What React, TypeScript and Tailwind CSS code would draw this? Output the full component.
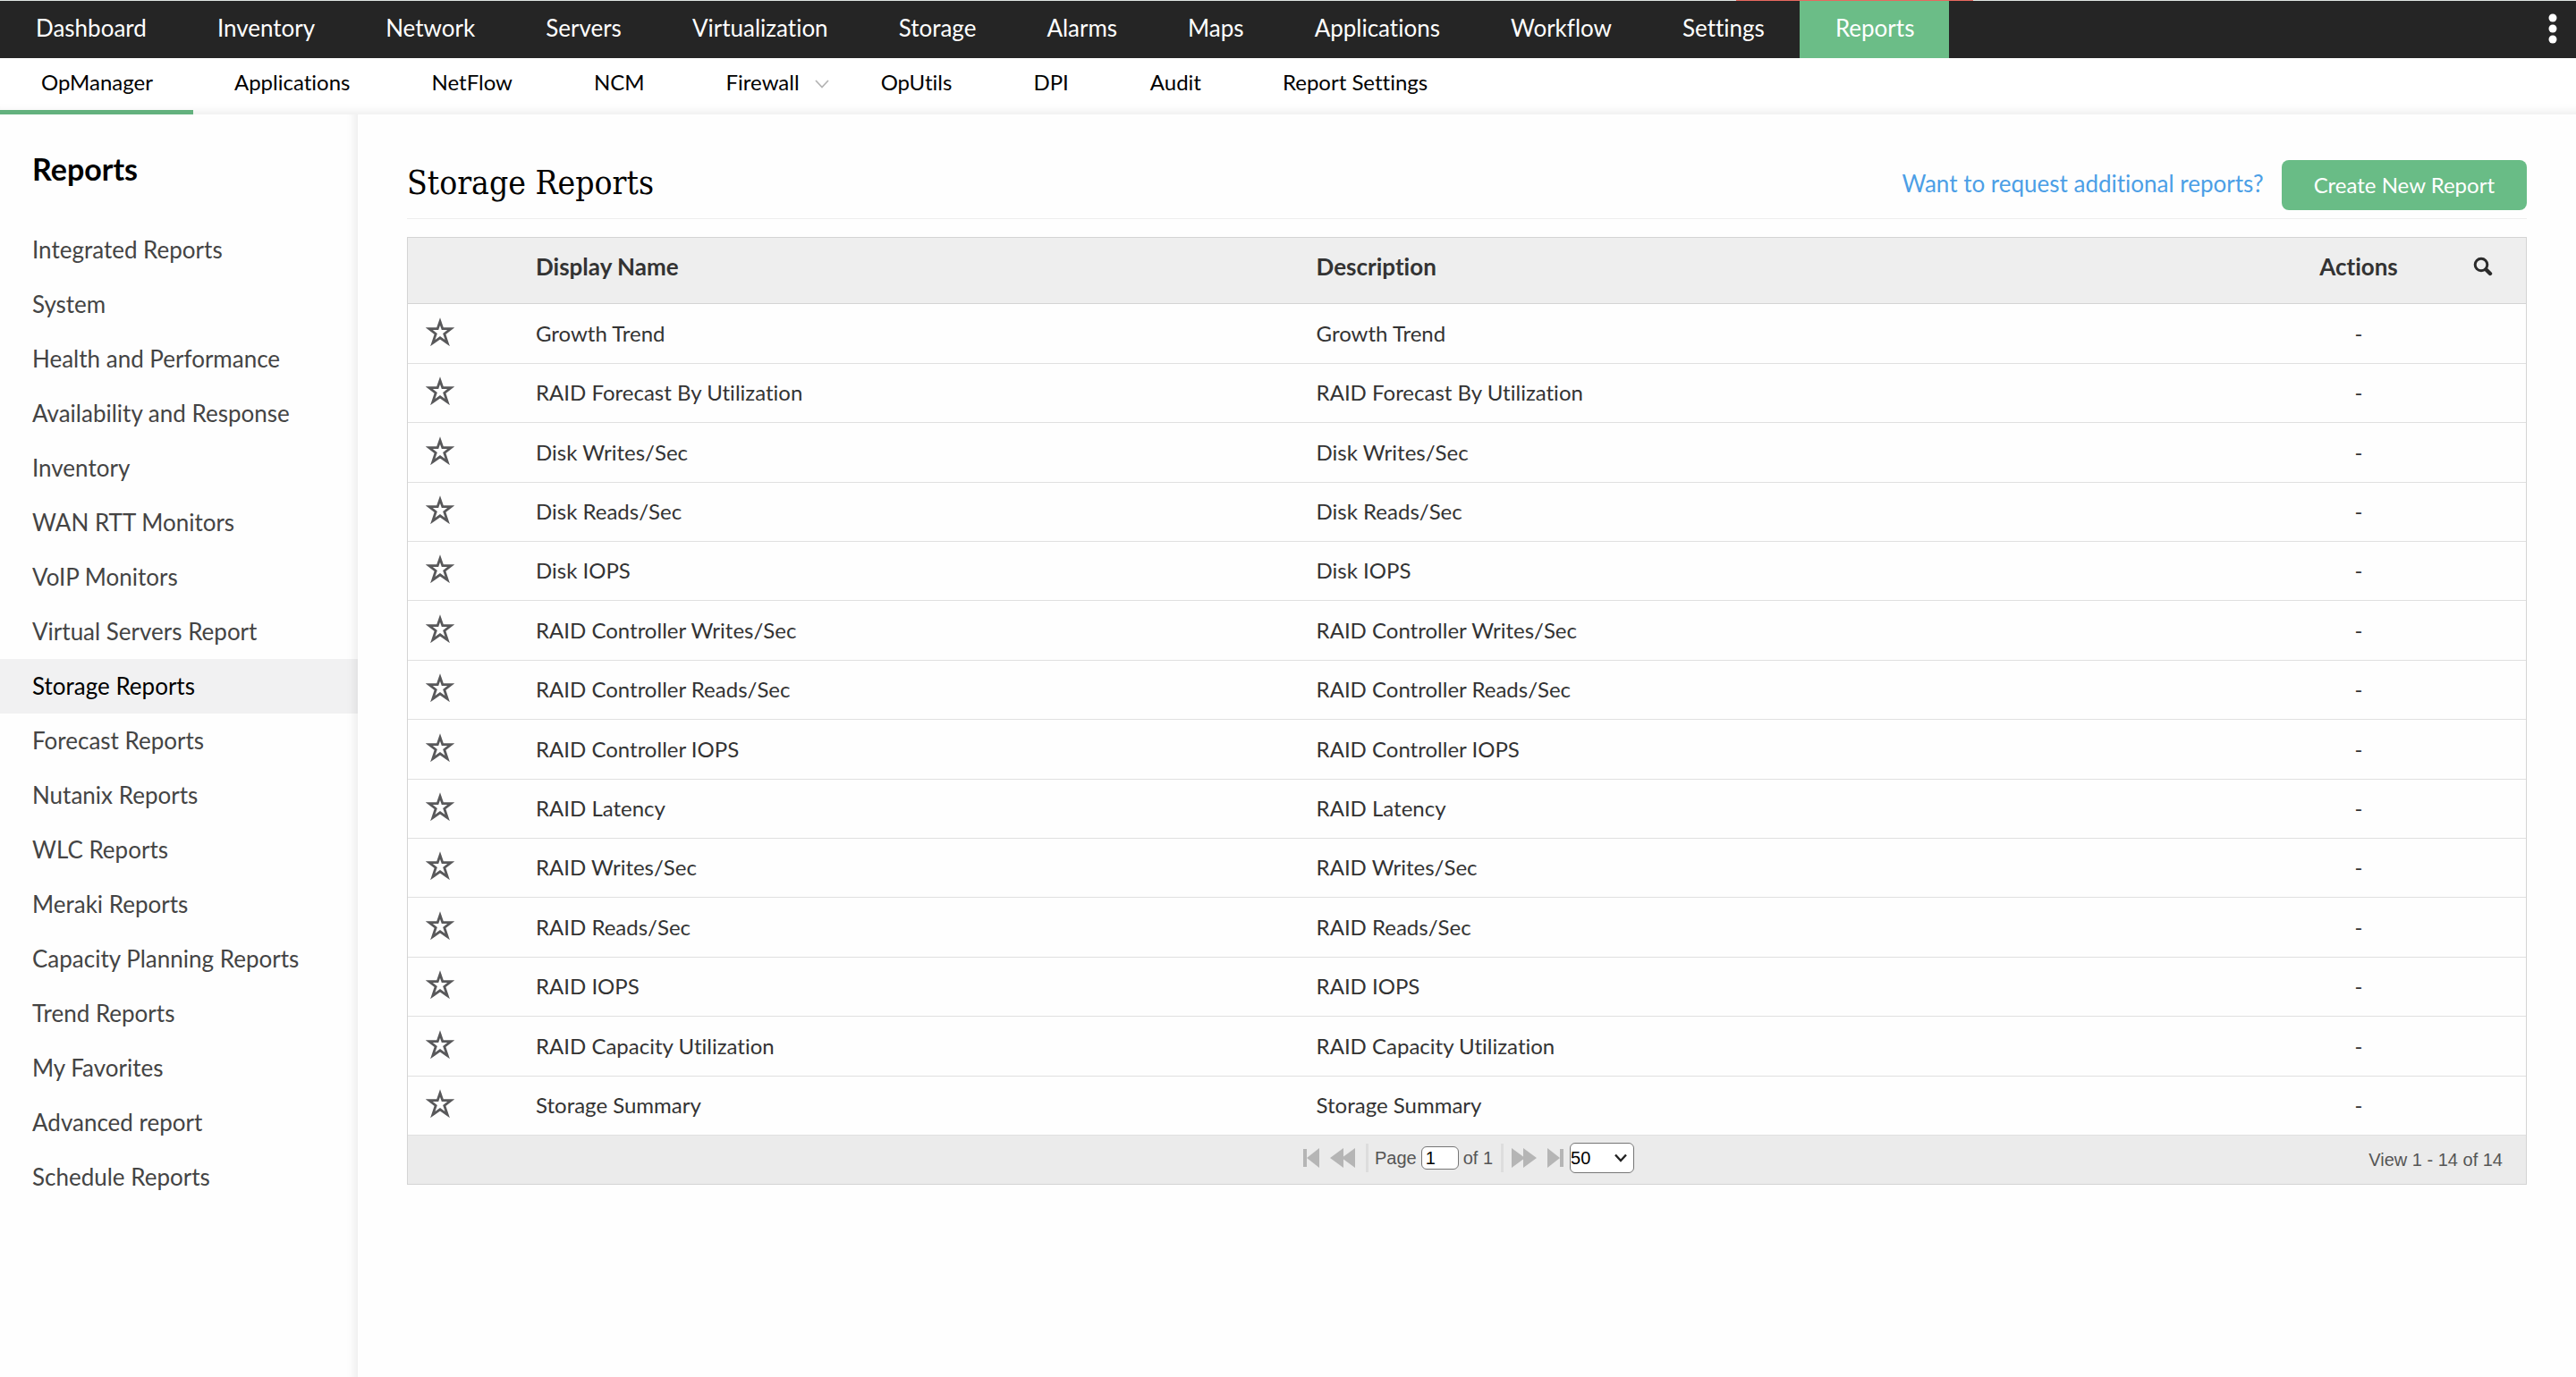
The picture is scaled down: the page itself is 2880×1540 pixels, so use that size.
import { useState } from 'react';

const modules = [
  'Dashboard',
  'Inventory',
  'Network',
  'Servers',
  'Virtualization',
  'Storage',
  'Alarms',
  'Maps',
  'Applications',
  'Workflow',
  'Settings',
  'Reports',
];

const products = ['OpManager', 'Applications', 'NetFlow', 'NCM', 'Firewall', 'OpUtils', 'DPI', 'Audit', 'Report Settings'];

const categories = [
  'Integrated Reports',
  'System',
  'Health and Performance',
  'Availability and Response',
  'Inventory',
  'WAN RTT Monitors',
  'VoIP Monitors',
  'Virtual Servers Report',
  'Storage Reports',
  'Forecast Reports',
  'Nutanix Reports',
  'WLC Reports',
  'Meraki Reports',
  'Capacity Planning Reports',
  'Trend Reports',
  'My Favorites',
  'Advanced report',
  'Schedule Reports',
];

const reports = [
  'Growth Trend',
  'RAID Forecast By Utilization',
  'Disk Writes/Sec',
  'Disk Reads/Sec',
  'Disk IOPS',
  'RAID Controller Writes/Sec',
  'RAID Controller Reads/Sec',
  'RAID Controller IOPS',
  'RAID Latency',
  'RAID Writes/Sec',
  'RAID Reads/Sec',
  'RAID IOPS',
  'RAID Capacity Utilization',
  'Storage Summary',
];

const StarIcon = () => (
  <svg viewBox="0 0 32 32" className="h-8 w-8" fill="none" stroke="#58585a" strokeWidth="2.8">
    <path d="M16 4.5 18.8 12.6H28.2L20.8 18.4 24.2 28.6 16 22.8 7.8 28.6 11.2 18.4 3.8 12.6H13.2Z" />
  </svg>
);

const SearchIcon = () => (
  <svg viewBox="0 0 22 22" className="h-[22px] w-[22px]" fill="none" stroke="#2b2b2b">
    <circle cx="9" cy="9" r="6.8" strokeWidth="3" />
    <path d="M14.5 14.5 19 19" strokeWidth="4.4" strokeLinecap="round" />
  </svg>
);

const TopNav = () => (
  <nav className="flex h-16 justify-between bg-[#252525] text-[26px] text-white">
    <div className="flex">
      {modules.map((name) => (
        <a
          key={name}
          href="#"
          className={`flex items-center pr-[39px] pb-1 pl-10 ${name === 'Reports' ? 'bg-[#6bbd87]' : ''}`}
        >
          {name}
        </a>
      ))}
    </div>
    <button aria-label="More" className="flex w-[52px] items-center justify-center">
      <svg viewBox="0 0 10 36" className="h-9 w-[10px]" fill="#fff">
        <circle cx="5" cy="5" r="4.5" />
        <circle cx="5" cy="17" r="4.5" />
        <circle cx="5" cy="29" r="4.5" />
      </svg>
    </button>
  </nav>
);

const SubNav = () => (
  <nav className="flex h-[63px] bg-white text-2xl text-black shadow-[inset_0_-14px_12px_-12px_rgba(0,0,0,0.09)]">
    {products.map((name) => (
      <a
        key={name}
        href="#"
        className={`relative flex items-center border-b-5 pr-[45px] pb-[5px] pl-[46px] ${
          name === 'OpManager' ? 'border-[#63b17e]' : 'border-transparent'
        }`}
      >
        {name}
        {name === 'Firewall' && (
          <svg viewBox="0 0 16 10" className="absolute top-6 right-3 h-[10px] w-4" fill="none" stroke="#b5b5b5">
            <path d="M1 1 8 8.5 15 1" strokeWidth="1.8" />
          </svg>
        )}
      </a>
    ))}
  </nav>
);

const Sidebar = () => (
  <aside className="w-[400px] shrink-0 pt-9 shadow-[inset_-14px_0_12px_-12px_rgba(0,0,0,0.09)]">
    <h2 className="px-9 text-[34px] leading-[50px] font-bold text-black">Reports</h2>
    <ul className="pt-[35px]">
      {categories.map((name) => (
        <li key={name}>
          <a
            href="#"
            className={`block px-9 text-[26px] leading-[61px] ${
              name === 'Storage Reports' ? 'bg-[#28284010] text-black' : 'text-[#444]'
            }`}
          >
            {name}
          </a>
        </li>
      ))}
    </ul>
  </aside>
);

const ReportTable = () => (
  <table className="w-full table-fixed text-left text-2xl text-[#333]">
    <colgroup>
      <col className="w-[143px]" />
      <col className="w-[36.85%]" />
      <col />
      <col className="w-[182px]" />
      <col className="w-24" />
    </colgroup>
    <thead>
      <tr className="h-[73px] border-b border-[#d4d4d4] bg-[#eee] text-[26px] font-bold">
        <th aria-label="Favorite" />
        <th className="pb-2">Display Name</th>
        <th className="pb-2">Description</th>
        <th className="pb-2 text-center">Actions</th>
        <th className="pb-2">
          <button aria-label="Search" className="mx-auto block">
            <SearchIcon />
          </button>
        </th>
      </tr>
    </thead>
    <tbody>
      {reports.map((name) => (
        <tr key={name} className="h-[66px] border-b border-[#e0e0e0] nth-[5n+1]:h-[67px] nth-[5n+3]:h-[67px]">
          <td className="pb-1 pl-5">
            <button aria-label={`Add ${name} to favorites`} className="block">
              <StarIcon />
            </button>
          </td>
          <td>{name}</td>
          <td>{name}</td>
          <td className="text-center">-</td>
          <td />
        </tr>
      ))}
    </tbody>
  </table>
);

const Pager = () => {
  const [page, setPage] = useState('1');

  return (
    <div className="grid h-[54px] grid-cols-[1fr_auto_1fr] items-center bg-[#ebebeb] font-['Liberation_Sans',Arial,sans-serif] text-xl text-[#555]">
      <div />
      <div className="flex items-center pb-1 pl-1">
        <button aria-label="First page" className="mr-3">
          <svg viewBox="0 0 18 22" className="h-[22px] w-[18px]" fill="#b5b5b5">
            <path d="M0 1H4V21H0ZM18 0V22L4 11Z" />
          </svg>
        </button>
        <button aria-label="Previous page" className="mr-3">
          <svg viewBox="0 0 28 22" className="h-[22px] w-7" fill="#b5b5b5">
            <path d="M15 0V22L0 11ZM28 0V22L13 11Z" />
          </svg>
        </button>
        <span className="mr-[7px] h-8 w-[3px] bg-[#ddd]" />
        <label htmlFor="page">Page</label>
        <input
          id="page"
          value={page}
          onChange={(e) => setPage(e.target.value)}
          className="mx-[5px] h-[26px] w-[42px] rounded-md border border-[#767676] bg-white px-1 text-black"
        />
        <span>of 1</span>
        <span className="mx-[9px] h-8 w-[3px] bg-[#ddd]" />
        <button aria-label="Next page" className="mr-3">
          <svg viewBox="0 0 28 22" className="h-[22px] w-7" fill="#b5b5b5">
            <path d="M0 0V22L15 11ZM13 0V22L28 11Z" />
          </svg>
        </button>
        <button aria-label="Last page" className="mr-[7px]">
          <svg viewBox="0 0 18 22" className="h-[22px] w-[18px]" fill="#b5b5b5">
            <path d="M0 0V22L14 11ZM14 1H18V21H14Z" />
          </svg>
        </button>
        <div className="relative">
          <select
            aria-label="Rows per page"
            defaultValue="50"
            className="block h-[34px] w-[72px] appearance-none rounded-md border border-[#767676] bg-white text-black"
          >
            <option>50</option>
            <option>100</option>
          </select>
          <svg viewBox="0 0 14 10" className="pointer-events-none absolute top-3 right-2 h-[10px] w-[14px]" fill="none" stroke="#222">
            <path d="M1 1.5 7 8 13 1.5" strokeWidth="2.4" />
          </svg>
        </div>
      </div>
      <span className="pr-[26px] text-right">View 1 - 14 of 14</span>
    </div>
  );
};

const App = () => {
  return (
    <div className="flex min-h-screen flex-col bg-[#fefefe] font-['Lato',sans-serif] [font-variant-ligatures:no-common-ligatures]">
      <div className="flex h-px bg-[#dfe5e2]">
        <span className="ml-[67.4%] w-[9.2%] bg-[#e8685f]" />
      </div>
      <TopNav />
      <SubNav />
      <div className="flex grow">
        <Sidebar />
        <main className="grow px-[55px]">
          <header className="flex items-start justify-between border-b border-[#eee] pt-[51px] pb-[9px]">
            <h1 className="pt-1 font-['DejaVu_Serif_Condensed','DejaVu_Serif',serif] text-[37px] leading-[44px] text-black">
              Storage Reports
            </h1>
            <div className="flex items-start gap-5">
              <a href="#" className="pt-1 text-[26px] leading-[44px] text-[#4c9fe6]">
                Want to request additional reports?
              </a>
              <button className="h-14 rounded-lg bg-[#69bc86] px-9 text-2xl text-white">Create New Report</button>
            </div>
          </header>
          <section className="mt-5 border border-[#d4d4d4]">
            <ReportTable />
            <Pager />
          </section>
        </main>
      </div>
    </div>
  );
};

export default App;
